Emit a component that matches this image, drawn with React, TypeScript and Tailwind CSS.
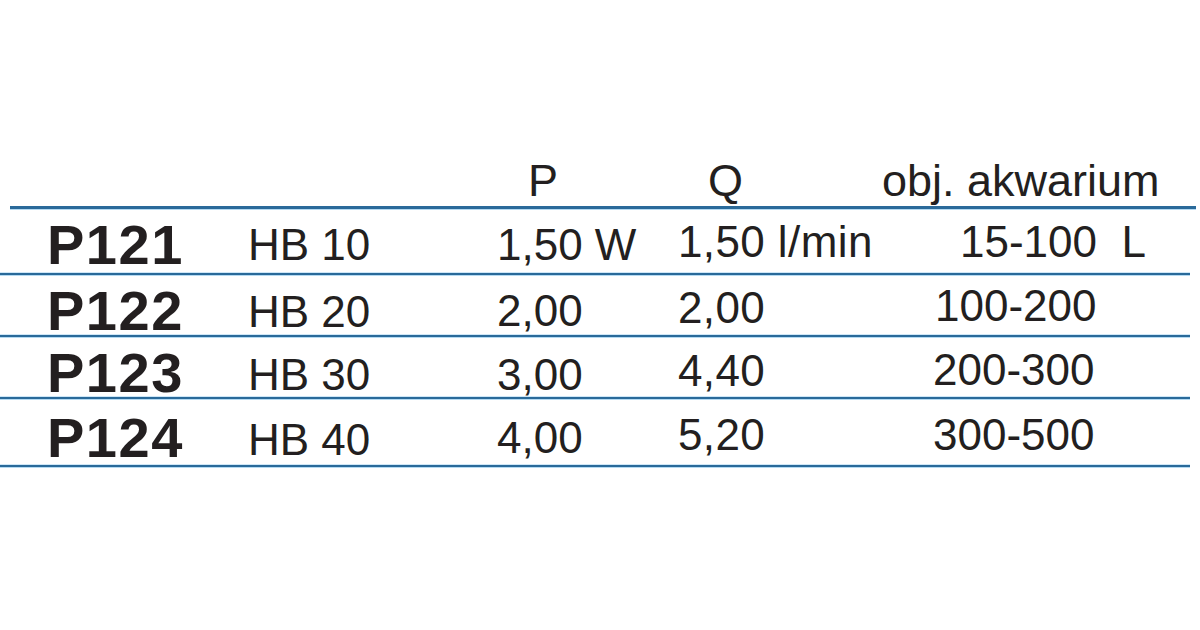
const rows = [
  {
    code: "P121",
    model: "HB 10",
    power: "1,50 W",
    flow: "1,50 l/min",
    volume: "15-100\u00a0\u00a0L",
    pad: ["pt-[8px]", "pt-[14px]", "pt-[14px]", "pt-[11px]", "pt-[11px] pl-[27px]"],
    height: "h-[64px]",
  },
  {
    code: "P122",
    model: "HB 20",
    power: "2,00",
    flow: "2,00",
    volume: "100-200",
    pad: ["pt-[8px]", "pt-[15px]", "pt-[14px]", "pt-[11px]", "pt-[9px] pl-[2px]"],
    height: "h-[60px]",
  },
  {
    code: "P123",
    model: "HB 30",
    power: "3,00",
    flow: "4,40",
    volume: "200-300",
    pad: ["pt-[8px]", "pt-[16px]", "pt-[16px]", "pt-[12px]", "pt-[11px]"],
    height: "h-[60px]",
  },
  {
    code: "P124",
    model: "HB 40",
    power: "4,00",
    flow: "5,20",
    volume: "300-500",
    pad: ["pt-[11px]", "pt-[19px]", "pt-[17px]", "pt-[14px]", "pt-[14px]"],
    height: "h-[66px]",
  },
];

function Rule({ thick }: { thick?: boolean }) {
  return thick ? (
    <div className="ml-[10px] h-[3px] w-[1186px] bg-[#2a6a9a] shadow-[0_1px_0_#b5daf2]" />
  ) : (
    <div className="h-[2px] w-[1190px] bg-[#2a6a9a] shadow-[0_1px_0_#b5daf2,0_-1px_0_#cfe7f7]" />
  );
}

export default function App() {
  return (
    <div
      className="h-[630px] w-[1200px] overflow-hidden bg-white text-[#231f20]"
      style={{ fontFamily: '"Liberation Sans", Arial, sans-serif' }}
    >
      {/* header */}
      <div className="grid h-[206px] grid-cols-[528px_180px_174px_1fr] pt-[158px] text-[45px] leading-none">
        <div />
        <div>P</div>
        <div>Q</div>
        <div>obj. akwarium</div>
      </div>
      <Rule thick />

      {rows.map((r) => (
        <div key={r.code}>
          <div
            className={`grid grid-cols-[248px_249px_181px_255px_1fr] text-[44px] leading-none ${r.height}`}
          >
            <div className={`pl-[47px] text-[56px] font-bold tracking-[1.5px] ${r.pad[0]}`}>
              {r.code}
            </div>
            <div className={r.pad[1]}>{r.model}</div>
            <div className={r.pad[2]}>{r.power}</div>
            <div className={`tracking-[0.4px] ${r.pad[3]}`}>{r.flow}</div>
            <div className={r.pad[4]}>{r.volume}</div>
          </div>
          <Rule />
        </div>
      ))}
    </div>
  );
}
